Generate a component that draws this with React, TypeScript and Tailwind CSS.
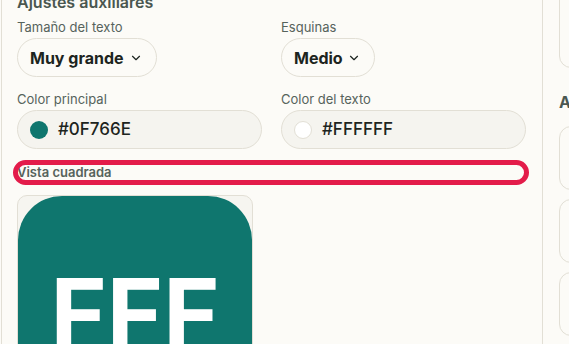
import { ChevronDown } from "lucide-react";

function Label({ children }: { children: React.ReactNode }) {
  return <div className="text-[13px] leading-4 text-[#56635c] mb-[3px]">{children}</div>;
}

function Select({ value, width }: { value: string; width: string }) {
  return (
    <div
      className={`${width} h-[39px] rounded-full border border-[#e2dfd5] bg-[#fcfbf7] flex items-center justify-between pl-[12px] pr-[13px]`}
    >
      <span className="text-[16px] font-bold text-[#1d2420]">{value}</span>
      <ChevronDown size={14} strokeWidth={2} className="text-[#1d2420]" />
    </div>
  );
}

function ColorInput({ value, swatch }: { value: string; swatch: string }) {
  return (
    <div className="w-[245px] h-[39px] rounded-full border border-[#e2dfd5] bg-[#f5f4ef] flex items-center pl-[12px] gap-[10px]">
      <span className={`w-[18px] h-[18px] rounded-full ${swatch}`} />
      <span className="text-[17px] font-medium text-[#1d2420]">{value}</span>
    </div>
  );
}

export default function App() {
  return (
    <div
      className="relative w-[569px] h-[344px] overflow-hidden bg-[#fcfbf7] flex"
      style={{ fontFamily: "Inter, 'Noto Sans', sans-serif" }}
    >
      <div className="ml-[1px] w-[542px] shrink-0 border-l border-r border-[#e2dfd5] pl-[15px] pr-[15px]">
        <h2 className="-mt-[8px] text-[16px] leading-5 font-semibold text-[#4a5750]">Ajustes auxiliares</h2>

        <div className="mt-[7px] grid grid-cols-[245px_245px] gap-x-[19px]">
          <div>
            <Label>Tamaño del texto</Label>
            <Select value="Muy grande" width="w-[140px]" />
          </div>
          <div>
            <Label>Esquinas</Label>
            <Select value="Medio" width="w-[94px]" />
          </div>
        </div>

        <div className="mt-[14px] grid grid-cols-[245px_245px] gap-x-[19px]">
          <div>
            <Label>Color principal</Label>
            <ColorInput value="#0F766E" swatch="bg-[#0f766e]" />
          </div>
          <div>
            <Label>Color del texto</Label>
            <ColorInput value="#FFFFFF" swatch="bg-white border border-[#e2dfd5]" />
          </div>
        </div>

        <div className="mt-[15px] text-[13px] leading-4 font-semibold text-[#56635c]">Vista cuadrada</div>

        <div className="mt-[15px] w-[236px] h-[240px] rounded-[10px] border border-[#e2dfd5] bg-[#f6f5f0]">
          <div className="w-[234px] h-[234px] rounded-[44px] bg-[#0f766e] flex items-center justify-center">
            <span className="text-[96px] leading-none font-bold text-white">FFF</span>
          </div>
        </div>
      </div>

      <div className="ml-[16px] flex-1 flex flex-col">
        <div className="-mt-[20px] h-[88px] w-[40px] rounded-[12px] border border-[#e2dfd5]" />
        <div className="mt-[24px] text-[16px] leading-5 font-bold text-[#4a5750]">Ajustes</div>
        <div className="mt-[14px] h-[64px] w-[40px] rounded-[12px] border border-[#e2dfd5]" />
        <div className="mt-[9px] h-[64px] w-[40px] rounded-[12px] border border-[#e2dfd5]" />
        <div className="mt-[9px] h-[64px] w-[40px] rounded-[12px] border border-[#e2dfd5]" />
      </div>

      <div className="absolute left-[13px] top-[160px] w-[516px] h-[25px] rounded-full border-[5px] border-[#e31c4a]" />
    </div>
  );
}
